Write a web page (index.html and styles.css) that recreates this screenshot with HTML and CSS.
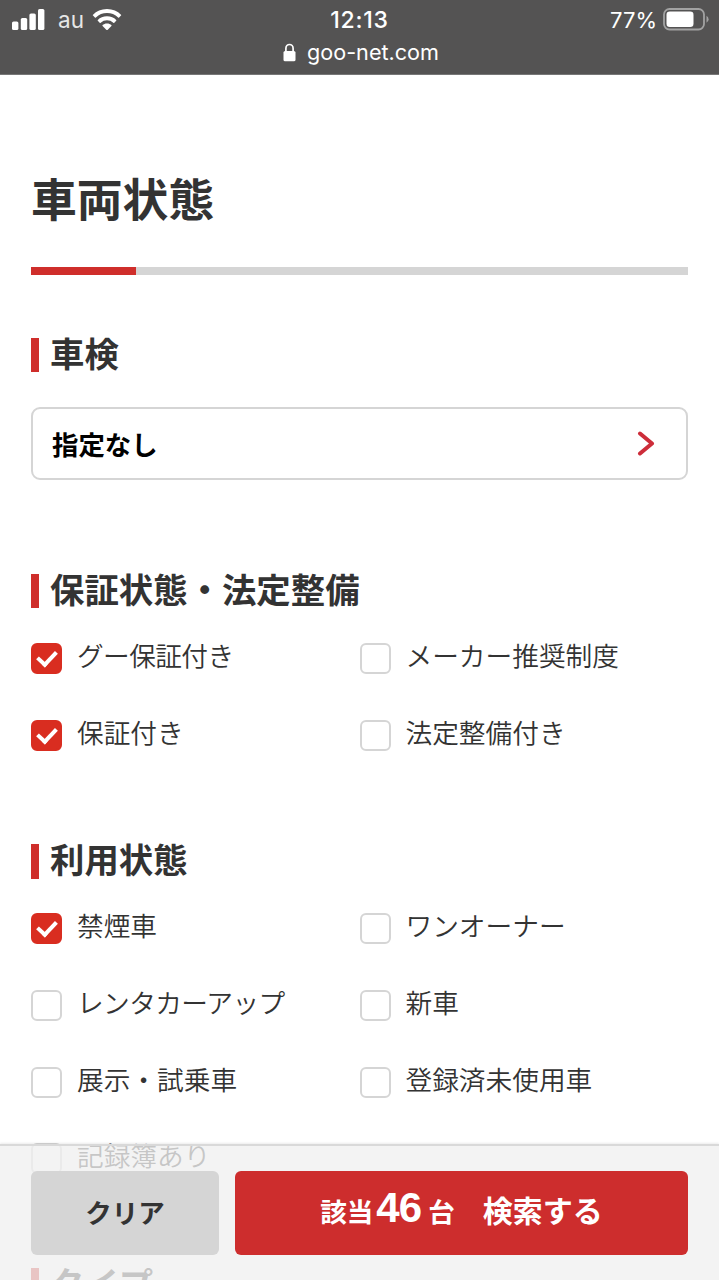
FILE: index.html
```html
<!DOCTYPE html>
<html lang="ja">
<head>
    <meta charset="UTF-8">
    <meta name="viewport" content="width=device-width, initial-scale=1.0">
    <title>車両状態</title>
    <link rel="stylesheet" href="styles.css">
</head>
<body>
    <header class="browser-bar">
        <div class="status">
            <div class="status-left">
                <svg class="signal" width="33" height="21" viewBox="0 0 33 21" fill="#fff">
                    <rect x="0" y="12.5" width="6.4" height="8.5" rx="1.6"/>
                    <rect x="8.8" y="9" width="6.4" height="12" rx="1.6"/>
                    <rect x="17.4" y="4.5" width="6.4" height="16.5" rx="1.6"/>
                    <rect x="26" y="0" width="6.4" height="21" rx="1.6"/>
                </svg>
                <span class="carrier">au</span>
                <svg class="wifi" width="30" height="22" viewBox="0 0 30 22" fill="#fff">
                    <path d="M15 0C20.8 0 25.600 2.200 29 5.700Q29.400 6.200 29 6.600L27.100 8.500Q26.600 8.900 26.100 8.500A16 16 0 0 0 3.900 8.500Q3.400 8.900 2.900 8.500L1 6.600Q.6 6.200 1 5.700C4.400 2.200 9.200 0 15 0Z"/>
                    <path d="M15 7.300C18.800 7.300 21.900 8.700 24.200 10.900Q24.600 11.400 24.200 11.800L22.300 13.700Q21.800 14.100 21.300 13.700A9.400 9.400 0 0 0 8.700 13.700Q8.200 14.100 7.700 13.700L5.800 11.800Q5.400 11.400 5.800 10.900C8.100 8.700 11.200 7.300 15 7.300Z"/>
                    <path d="M15 14.500C16.800 14.500 18.300 15.100 19.400 16.100Q19.800 16.500 19.400 17L15.500 20.900Q15 21.300 14.500 20.900L10.600 17Q10.200 16.500 10.600 16.100C11.700 15.100 13.200 14.500 15 14.500Z"/>
                </svg>
            </div>
            <div class="clock">12:13</div>
            <div class="status-right">
                <span class="percent">77%</span>
                <svg class="battery" width="46" height="23" viewBox="0 0 46 23">
                    <rect x="1" y="1" width="40" height="20.500" rx="5.500" fill="none" stroke="#a2a2a2" stroke-width="1.800"/>
                    <rect x="3.500" y="3.500" width="27" height="15.500" rx="3.300" fill="#fff"/>
                    <path d="M43.500 7.800Q45.600 8.800 45.600 11.300T43.500 14.800Z" fill="#a2a2a2"/>
                </svg>
            </div>
        </div>
        <div class="address">
            <svg class="lock" width="13" height="19" viewBox="0 0 13 19">
                <path d="M2.900 9V5.500a3.600 4 0 0 1 7.200 0V9" fill="none" stroke="#fff" stroke-width="1.700"/>
                <rect x="0.500" y="8" width="12" height="10.300" rx="1.600" fill="#fff"/>
            </svg>
            <span>goo-net.com</span>
        </div>
    </header>

    <main class="page">
        <h1 class="title">車両状態</h1>
        <div class="progress"><div class="progress-value"></div></div>

        <section class="group">
            <h2 class="heading">車検</h2>
            <button class="select" type="button">
                <span>指定なし</span>
                <svg width="18" height="25" viewBox="0 0 18 25">
                    <path d="M3 2.500L15 12.500L3 22.500" fill="none" stroke="#cd2d3a" stroke-width="4" stroke-linecap="round" stroke-linejoin="round"/>
                </svg>
            </button>
        </section>

        <section class="group">
            <h2 class="heading">保証状態・法定整備</h2>
            <div class="options">
                <label class="option"><input type="checkbox" class="check" checked><span class="kana">グー保証付き</span></label>
                <label class="option"><input type="checkbox" class="check"><span>メーカー推奨制度</span></label>
                <label class="option"><input type="checkbox" class="check" checked><span>保証付き</span></label>
                <label class="option"><input type="checkbox" class="check"><span>法定整備付き</span></label>
            </div>
        </section>

        <section class="group">
            <h2 class="heading">利用状態</h2>
            <div class="options">
                <label class="option"><input type="checkbox" class="check" checked><span>禁煙車</span></label>
                <label class="option"><input type="checkbox" class="check"><span>ワンオーナー</span></label>
                <label class="option"><input type="checkbox" class="check"><span class="kana">レンタカーアップ</span></label>
                <label class="option"><input type="checkbox" class="check"><span>新車</span></label>
                <label class="option"><input type="checkbox" class="check"><span>展示・試乗車</span></label>
                <label class="option"><input type="checkbox" class="check"><span>登録済未使用車</span></label>
                <label class="option"><input type="checkbox" class="check"><span>記録簿あり</span></label>
            </div>
        </section>

        <section class="group">
            <h2 class="heading">タイプ</h2>
        </section>
    </main>

    <footer class="search-bar">
        <button class="button clear" type="button">クリア</button>
        <button class="button search" type="button">
            <span class="hit">該当</span><span class="count">46</span><span class="hit">台</span><span class="submit">検索する</span>
        </button>
    </footer>
</body>
</html>
```
FILE: styles.css
```css
* {
    margin: 0;
    padding: 0;
    box-sizing: border-box;
}

body {
    font-family: "Noto Sans CJK JP", sans-serif;
    background: #fff;
    color: #333;
    height: 1280px;
    overflow: hidden;
}

svg {
    display: block;
    flex-shrink: 0;
}

/* browser bar */
.browser-bar {
    height: 75px;
    background: #545353;
    border-bottom: 1px solid #777;
    color: #fff;
    font-family: Inter, "Liberation Sans", sans-serif;
    line-height: 30px;
}

.status {
    display: grid;
    grid-template-columns: 1fr auto 1fr;
    height: 38px;
    padding: 4px 12px 0;
}

.status-left,
.status-right {
    display: flex;
    align-items: center;
    height: 30px;
}

.status-left svg {
    margin-top: 1px;
}

.carrier {
    margin: 1px 8px 0 13px;
    font-size: 22.5px;
    color: #e6e6e6;
}

.clock {
    margin-top: 1px;
    font-size: 23px;
    font-weight: 500;
    letter-spacing: 0.8px;
}

.status-right {
    justify-content: flex-end;
    margin-right: -2px;
}

.percent {
    margin: 1px 6px 0 0;
    font-size: 22px;
}

.address {
    display: flex;
    justify-content: center;
    align-items: center;
    gap: 11px;
    height: 30px;
    padding-left: 3px;
    margin-top: -1px;
    font-size: 21.6px;
}

/* form */
.page {
    height: 1205px;
    padding: 95px 31px 0;
    overflow: hidden;
}

.title {
    font-size: 45.8px;
    line-height: 55px;
}

.progress {
    height: 7.7px;
    margin: 42px 0 63.3px;
    background: #d5d5d5;
}

.progress-value {
    width: 16%;
    height: 100%;
    background: #cf2e2b;
}

.group {
    margin-bottom: 93.9px;
}

.heading {
    height: 34.5px;
    padding-left: 11px;
    border-left: 8px solid #cf2e2b;
    font-size: 34.4px;
    line-height: 29px;
}

.select {
    display: flex;
    justify-content: space-between;
    align-items: center;
    width: 100%;
    height: 73px;
    margin-top: 34.5px;
    padding: 0 31px 0 19px;
    background: #fff;
    border: 2px solid #d5d5d5;
    border-radius: 9px;
    color: #000;
    font: bold 26.4px "Noto Sans CJK JP", sans-serif;
}

.options {
    display: grid;
    grid-template-columns: 1fr 1fr;
    row-gap: 46px;
    padding-top: 34.5px;
}

.option {
    display: flex;
    gap: 15px;
    height: 30.7px;
    font-size: 26.7px;
    font-weight: 350;
    line-height: 23px;
    white-space: nowrap;
}

.kana {
    letter-spacing: -0.6px;
}

.check {
    appearance: none;
    flex-shrink: 0;
    width: 31px;
    height: 31px;
    background: #fff;
    border: 2px solid #d5d5d5;
    border-radius: 6px;
}

.check:checked {
    display: flex;
    justify-content: center;
    padding-top: 2px;
    background: #d92d20;
    border-color: #d92d20;
}

.check:checked::before {
    content: "";
    width: 8px;
    height: 15px;
    border: solid #fff;
    border-width: 0 4px 4px 0;
    transform: rotate(43deg);
}

/* fixed search bar */
.search-bar {
    position: fixed;
    left: 0;
    right: 0;
    bottom: 0;
    display: flex;
    gap: 16px;
    height: 136px;
    padding: 25px 31px;
    background: rgba(239, 239, 239, 0.78);
    border-top: 2px solid #d9d9d9;
    box-shadow: 0 -1px 2px rgba(0, 0, 0, 0.08);
}

.button {
    height: 84px;
    border: none;
    border-radius: 6px;
    font: bold 26.5px "Noto Sans CJK JP", sans-serif;
}

.clear {
    width: 188px;
    padding-bottom: 4px;
    background: #d5d5d5;
    color: #333;
}

.search {
    display: flex;
    flex: 1;
    justify-content: center;
    align-items: baseline;
    padding-top: 13px;
    background: #cd2d2d;
    color: #fff;
}

.count {
    margin: 0 7px 0 3px;
    font-family: "Liberation Sans", sans-serif;
    font-size: 42px;
    letter-spacing: -0.9px;
}

.submit {
    margin-left: 28px;
    font-size: 30px;
}
```
